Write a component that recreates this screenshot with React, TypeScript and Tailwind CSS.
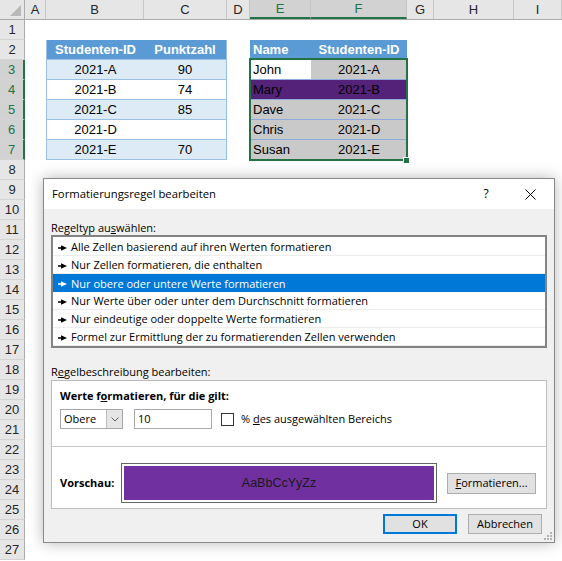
import React from "react";

const COLS = [
  { key: "A", w: "w-[21px]" },
  { key: "B", w: "w-[98px]" },
  { key: "C", w: "w-[83px]" },
  { key: "D", w: "w-[23px]" },
  { key: "E", w: "w-[61px]" },
  { key: "F", w: "w-[96px]" },
  { key: "G", w: "w-[27px]" },
  { key: "H", w: "w-[80px]" },
  { key: "I", w: "w-[48px]" },
];

const B_TEXT = ["Studenten-ID", "2021-A", "2021-B", "2021-C", "2021-D", "2021-E"];
const C_TEXT = ["Punktzahl", "90", "74", "85", "", "70"];
const E_TEXT = ["Name", "John", "Mary", "Dave", "Chris", "Susan"];
const F_TEXT = ["Studenten-ID", "2021-A", "2021-B", "2021-C", "2021-D", "2021-E"];

function cellInfo(r: number, col: string): { cls: string; text: string } {
  if (r >= 2 && r <= 7) {
    const i = r - 2;
    if (col === "B" || col === "C") {
      let cls = "flex items-center justify-center border-b border-b-[#9bc2e6]";
      cls += col === "B" ? " border-l border-l-[#9bc2e6]" : " border-r border-r-[#9bc2e6]";
      if (r === 2) cls += " bg-[#5b9bd5] text-white font-bold";
      else if (r % 2 === 1) cls += " bg-[#ddebf7]";
      else cls += " bg-white";
      return { cls, text: col === "B" ? B_TEXT[i] : C_TEXT[i] };
    }
    if (col === "E" || col === "F") {
      let cls = "flex items-center border-b border-b-[#8faadc]";
      cls += col === "E" ? " justify-start pl-[3px]" : " justify-center";
      if (r === 2) cls += " bg-[#5b9bd5] text-white font-bold border-b-[#5b9bd5]";
      else if (r === 3 && col === "E") cls += " bg-white";
      else if (r === 4) cls += " bg-[#552279]";
      else cls += " bg-[#c9c9c9]";
      return { cls, text: col === "E" ? E_TEXT[i] : F_TEXT[i] };
    }
  }
  return { cls: "", text: "" };
}

function HeaderRow() {
  return (
    <div className="flex h-[20px] min-h-[20px] bg-[#e6e6e6] border-b border-[#ababab] shrink-0">
      <div className="relative w-[25px] h-full border-r border-[#ababab]">
        <div className="absolute right-[3px] bottom-[3px] w-0 h-0 border-l-[11px] border-l-transparent border-b-[11px] border-b-[#b8b8b8]" />
      </div>
      {COLS.map((c) => {
        const sel = c.key === "E" || c.key === "F";
        return (
          <div
            key={c.key}
            className={`${c.w} h-full flex items-center justify-center border-r border-[#c6c6c6] ${
              sel ? "bg-[#d2d2d2] text-[#217346] border-b-2 border-b-[#217346]" : "text-[#262626]"
            }`}
          >
            {c.key}
          </div>
        );
      })}
    </div>
  );
}

function SheetRow({ r }: { r: number }) {
  const sel = r >= 3 && r <= 7;
  return (
    <div className="flex h-[20px] min-h-[20px] shrink-0">
      <div
        className={`w-[25px] h-full flex items-center justify-center border-b border-b-[#d4d4d4] ${
          sel
            ? "bg-[#d2d2d2] text-[#217346] border-r-2 border-r-[#217346]"
            : "bg-[#e6e6e6] text-[#262626] border-r border-r-[#ababab]"
        }`}
      >
        {r}
      </div>
      {COLS.map((c) => {
        const info = cellInfo(r, c.key);
        return (
          <div key={c.key} className={`${c.w} h-full ${info.cls}`}>
            {info.text}
          </div>
        );
      })}
    </div>
  );
}

function Sheet() {
  const rows = Array.from({ length: 27 }, (_, i) => i + 1);
  return (
    <div className="flex flex-col">
      <HeaderRow />
      {rows.map((r) => (
        <SheetRow key={r} r={r} />
      ))}
      <div className="absolute left-[249px] top-[58px] w-[159px] h-[103px] border-2 border-[#217346] pointer-events-none" />
      <div className="absolute left-[403px] top-[157px] w-[7px] h-[7px] bg-[#217346] border border-white" />
    </div>
  );
}

function Arrow({ white }: { white?: boolean }) {
  const c = white ? "#ffffff" : "#000000";
  return (
    <svg width="9" height="6" viewBox="0 0 9 6" className="shrink-0">
      <rect x="0" y="2.25" width="4" height="1.5" fill={c} />
      <polygon points="3,0.25 9,3 3,5.75" fill={c} />
    </svg>
  );
}

const ITEMS = [
  "Alle Zellen basierend auf ihren Werten formatieren",
  "Nur Zellen formatieren, die enthalten",
  "Nur obere oder untere Werte formatieren",
  "Nur Werte über oder unter dem Durchschnitt formatieren",
  "Nur eindeutige oder doppelte Werte formatieren",
  "Formel zur Ermittlung der zu formatierenden Zellen verwenden",
];

function Dialog() {
  return (
    <div className="absolute left-[43px] top-[178px] w-[512px] h-[365px] border border-[#888888] bg-[#f0f0f0] shadow-[0_0_14px_rgba(0,0,0,0.28)] flex flex-col font-['Open_Sans',sans-serif] text-[11px] text-black">
      <div className="h-[30px] bg-white flex items-center pl-[8px] shrink-0">
        <span className="text-[11.3px]">Formatierungsregel bearbeiten</span>
        <span className="ml-auto w-[12px] text-center text-[12px]">?</span>
        <svg width="11" height="11" viewBox="0 0 11 11" className="ml-[33px] mr-[18px]">
          <path d="M0.5 0.5 L10.5 10.5 M10.5 0.5 L0.5 10.5" stroke="#000" strokeWidth="1" />
        </svg>
      </div>
      <div className="relative flex-1 flex flex-col px-[7px]">
        <div className="mt-[10px] h-[16px] leading-[16px] pt-[1px]">
          Regeltyp au<u>s</u>wählen:
        </div>
        <div className="h-[113px] border-2 border-[#838383] bg-white pt-[1px] flex flex-col">
          {ITEMS.map((t, i) => {
            const sel = i === 2;
            return (
              <div
                key={t}
                className={`h-[18px] flex items-center pl-[5px] pt-[2px] gap-[4px] ${
                  sel ? "bg-[#0078d7] text-white" : "border-b border-[#ededed]"
                }`}
              >
                <Arrow white={sel} />
                <span>{t}</span>
              </div>
            );
          })}
        </div>
        <div className="mt-[15px] h-[16px] leading-[16px] pt-[1px]">
          R<u>e</u>gelbeschreibung bearbeiten:
        </div>
        <div className="mt-[1px] h-[129px] border border-[#bcbcbc] bg-white flex flex-col">
          <div className="mt-[6px] pl-[8px] h-[16px] leading-[16px] pt-[1px] font-bold">
            Werte f<u>o</u>rmatieren, für die gilt:
          </div>
          <div className="mt-[6px] pl-[8px] h-[20px] flex items-center">
            <div className="w-[63px] h-[20px] border border-[#a8a8a8] bg-white flex">
              <div className="flex-1 pl-[3px] pt-[1px] flex items-center">Obere</div>
              <div className="w-[16px] h-full bg-[#e5e5e5] border-l border-[#bdbdbd] flex items-center justify-center">
                <svg width="8" height="5" viewBox="0 0 8 5">
                  <path d="M0.5 0.5 L4 4 L7.5 0.5" stroke="#606060" strokeWidth="1" fill="none" />
                </svg>
              </div>
            </div>
            <div className="ml-[11px] w-[78px] h-[20px] border border-[#a8a8a8] bg-white pl-[3px] pt-[1px] flex items-center">
              10
            </div>
            <div className="ml-[9px] w-[13px] h-[13px] border border-[#333333] bg-white" />
            <div className="ml-[7px] pt-[1px]">
              % <u>d</u>es ausgewählten Bereichs
            </div>
          </div>
          <div className="mt-[17px] border-t border-[#c8c8c8]" />
          <div className="mt-[16px] h-[40px] flex items-center">
            <div className="w-[69px] pl-[8px] pt-[1px] font-bold">Vorschau:</div>
            <div className="w-[316px] h-[40px] border border-[#646464] bg-white p-[2px]">
              <div className="w-full h-full bg-[#7030a0] flex items-center justify-center font-['Liberation_Sans',Arial,sans-serif] text-[12.5px] text-[#1a1a1a]">
                AaBbCcYyZz
              </div>
            </div>
            <div className="ml-[10px] w-[89px] h-[21px] border border-[#adadad] bg-[#e1e1e1] pt-[1px] flex items-center justify-center">
              <span>
                <u>F</u>ormatieren...
              </span>
            </div>
          </div>
        </div>
        <div className="mt-[5px] flex justify-end gap-[11px] pr-[5px]">
          <div className="w-[74px] h-[20px] border-2 border-[#0078d7] bg-[#e1e1e1] pt-[1px] flex items-center justify-center">
            OK
          </div>
          <div className="w-[74px] h-[20px] border border-[#adadad] bg-[#e1e1e1] pt-[1px] flex items-center justify-center">
            Abbrechen
          </div>
        </div>
        <svg width="8" height="8" viewBox="0 0 8 8" className="absolute right-[2px] bottom-[2px]">
          <rect x="6" y="0" width="2" height="2" fill="#b4b4b4" />
          <rect x="3" y="3" width="2" height="2" fill="#b4b4b4" />
          <rect x="6" y="3" width="2" height="2" fill="#b4b4b4" />
          <rect x="0" y="6" width="2" height="2" fill="#b4b4b4" />
          <rect x="3" y="6" width="2" height="2" fill="#b4b4b4" />
          <rect x="6" y="6" width="2" height="2" fill="#b4b4b4" />
        </svg>
      </div>
    </div>
  );
}

export default function App() {
  return (
    <div className="relative w-[562px] h-[561px] overflow-hidden bg-white font-['Liberation_Sans',Arial,sans-serif] text-[13px] text-black">
      <Sheet />
      <Dialog />
    </div>
  );
}
